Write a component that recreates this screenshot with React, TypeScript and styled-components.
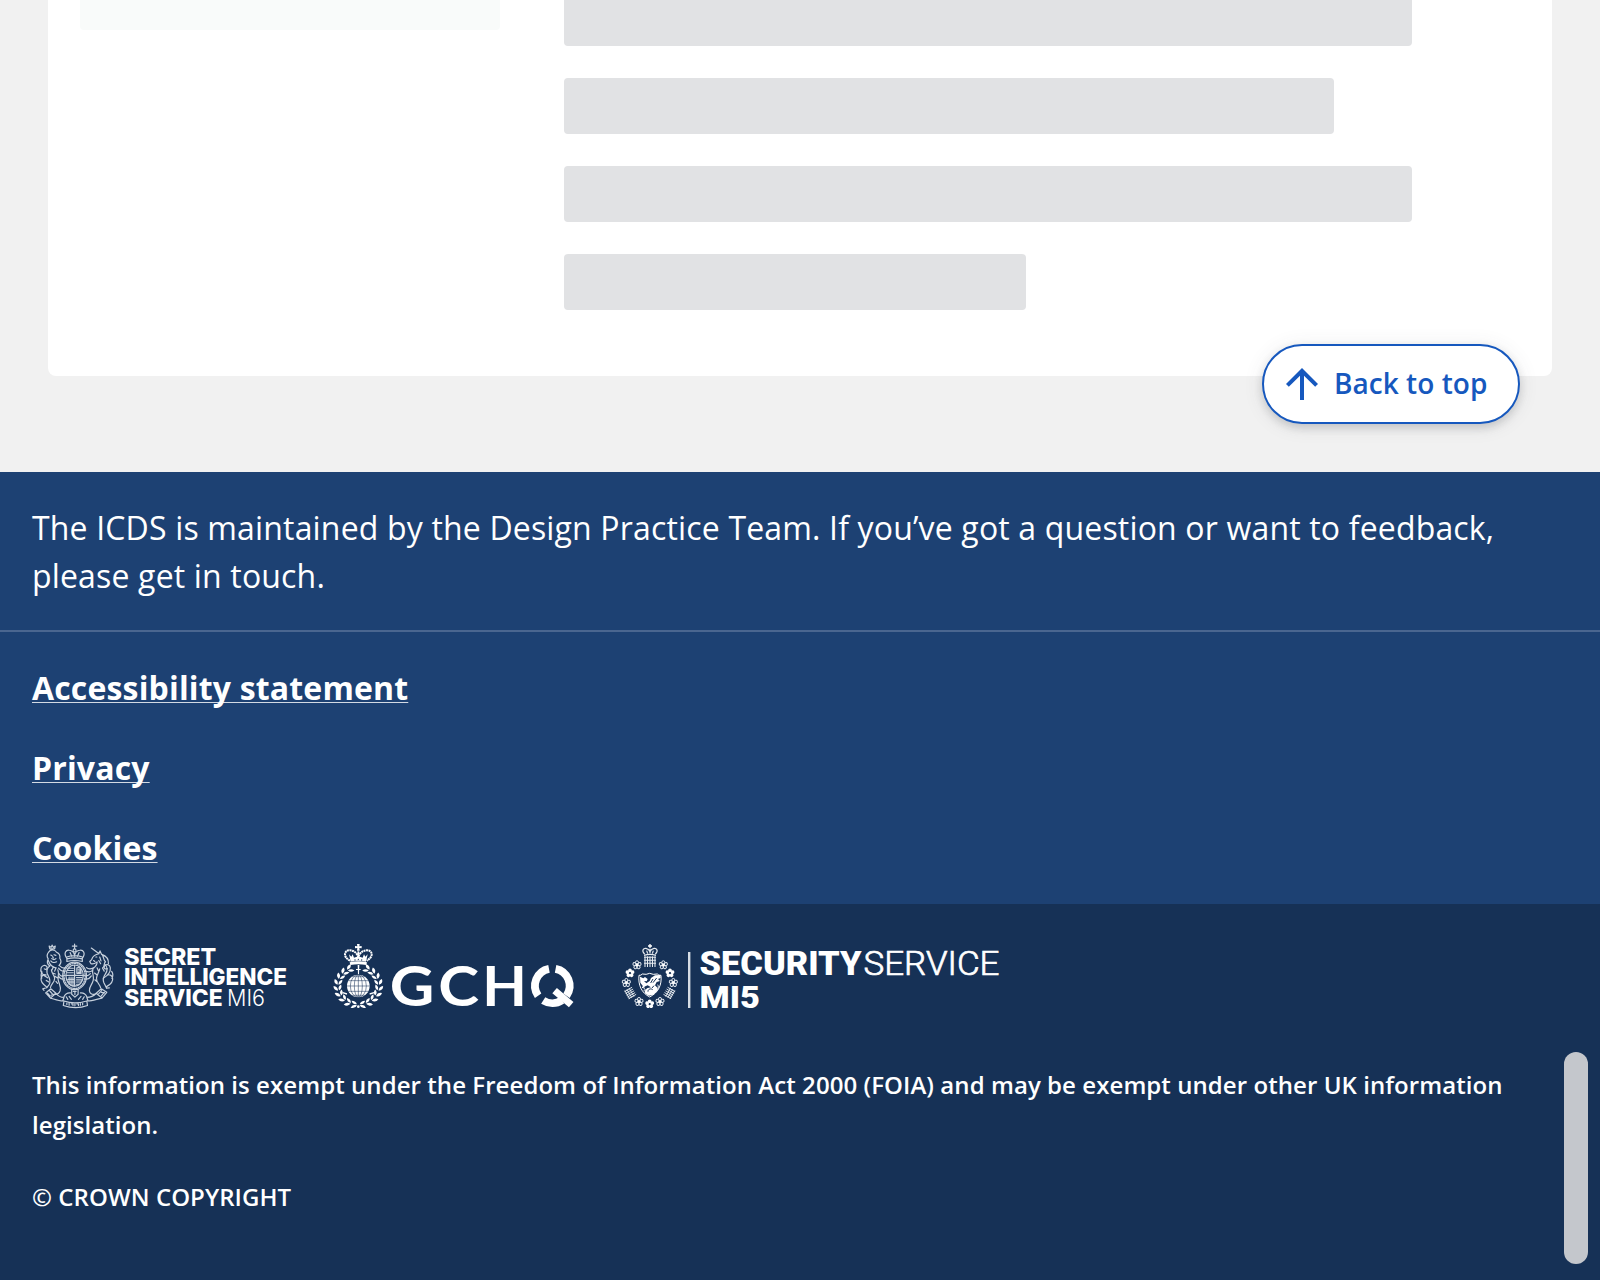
import React from "react";
import styled, { createGlobalStyle } from "styled-components";

const GlobalStyle = createGlobalStyle`
  *, *::before, *::after { box-sizing: border-box; }
  html, body { margin: 0; padding: 0; }
  body { background: #f1f1f1; overflow: hidden; font-family: "Open Sans", "Noto Sans", sans-serif; }
`;

const Page = styled.div`
  position: relative;
  display: flex;
  flex-direction: column;
  width: 1600px;
  height: 1280px;
  overflow: hidden;
  background: #f1f1f1;
`;

const Main = styled.main`
  height: 472px;
  padding: 0 48px 96px;
`;

const Card = styled.section`
  display: grid;
  grid-template-columns: 420px 1fr;
  align-items: start;
  column-gap: 64px;
  height: 376px;
  padding: 0 32px;
  background: #ffffff;
  border-radius: 0 0 8px 8px;
`;

const SidePanel = styled.div`
  height: 30px;
  background: #f9fbfa;
  border-radius: 0 0 4px 4px;
`;

const Skeletons = styled.div`
  display: flex;
  flex-direction: column;
  gap: 32px;
`;

const Skeleton = styled.div<{ $width: number; $cut?: boolean }>`
  width: ${(p) => p.$width}px;
  height: ${(p) => (p.$cut ? 46 : 56)}px;
  background: #e1e2e4;
  border-radius: ${(p) => (p.$cut ? "0 0 4px 4px" : "4px")};
`;

const BackToTop = styled.button`
  position: absolute;
  top: 344px;
  right: 80px;
  display: flex;
  align-items: center;
  gap: 8px;
  width: 258px;
  height: 80px;
  padding: 0 0 0 14px;
  border: 2px solid #1658be;
  border-radius: 40px;
  background: #ffffff;
  color: #1658be;
  font: 600 28px/48px "Open Sans", "Noto Sans", sans-serif;
  white-space: nowrap;
  box-shadow: 0 4px 8px rgba(65, 70, 77, 0.2), 0 2px 20px rgba(65, 70, 77, 0.1);
`;

const ButtonLabel = styled.span`
  padding-bottom: 2px;
  letter-spacing: 0.04px;
`;

const Footer = styled.footer`
  color: #ffffff;
  background: #1d4173;
`;

const Description = styled.p`
  margin: 0;
  padding: 32px 32px 30px;
  border-bottom: 2px solid #4a6690;
  font-size: 32px;
  line-height: 48px;
  letter-spacing: 0.165px;
`;

const Links = styled.nav`
  display: flex;
  flex-direction: column;
  align-items: flex-start;
  gap: 32px;
  padding: 32px;
`;

const FooterLink = styled.a`
  color: #ffffff;
  font-size: 32px;
  font-weight: 700;
  line-height: 48px;
  letter-spacing: 0.16px;
  text-decoration: underline;
  text-decoration-color: #d3dae4;
  text-decoration-thickness: 1px;
  text-decoration-skip-ink: none;
  text-underline-offset: 2px;
`;

const Legal = styled.div`
  display: flex;
  flex-direction: column;
  height: 376px;
  padding: 32px 32px 0;
  background: #163156;
`;

const Logos = styled.div`
  display: flex;
  align-items: flex-start;
  height: 129px;
`;

const Logo = styled.svg`
  display: block;
  flex: none;
  height: 80px;
  fill: #ffffff;
`;

const LegalText = styled.p`
  margin: 0 0 32px;
  font-size: 24px;
  font-weight: 600;
  line-height: 40px;
  letter-spacing: 0.066px;
`;

const ScrollThumb = styled.div`
  position: absolute;
  top: 1052px;
  right: 12px;
  width: 24px;
  height: 212px;
  border-radius: 12px;
  background: #c4c7cc;
`;

const NAVY = "#163156";

type WordProps = {
  x: number;
  y: number;
  width: number;
  size: number;
  weight: number;
  family?: string;
  outline?: number;
  children: string;
};

function Word({ x, y, width, size, weight, family = "Roboto", outline = 0, children }: WordProps) {
  return (
    <text
      x={x}
      y={y}
      fontFamily={`${family}, "Liberation Sans", sans-serif`}
      fontSize={size}
      fontWeight={weight}
      textLength={width}
      lengthAdjust="spacingAndGlyphs"
      stroke={outline ? "#fff" : "none"}
      strokeWidth={outline}
    >
      {children}
    </text>
  );
}

function SisLogo() {
  return (
    <Logo width="288" viewBox="32 936 288 80" role="img" aria-label="Secret Intelligence Service MI6">
      <g transform="translate(36.6 940.3) scale(.322 .321)" fill="none" stroke="#c6d0dc" strokeWidth="3.7" strokeLinecap="round" strokeLinejoin="round">
        {/* crown */}
        <path d="M118 12v14M111 18h14M118 27c-6 0-6 9 0 9s6-9 0-9" />
        <path d="M94 56C82 40 92 29 102 31c8 1 14 7 16 15 2-8 8-14 16-15 10-2 20 9 8 25M94 52q24-8 48 0M94 58q24-7 48 0v8q-24-6-48 0zM104 38l5 12M132 38l-5 12M118 40v10" />
        {/* garter and quartered shield */}
        <ellipse cx="118" cy="111" rx="37" ry="43" />
        <ellipse cx="118" cy="111" rx="33" ry="39" strokeDasharray="4 4" />
        <ellipse cx="118" cy="110" rx="27" ry="33" />
        <path d="M118 78v65M91 109h54M97 87h17M95 94h19M95 101h19M125 86c10-3 14 2 13 17h-13zM129 92h6v7h-6M101 115v22M107 115v26M113 115v28M97 122h18M97 130h18M124 116h17M124 123h16M124 130h13M124 137h8" />
        {/* lion */}
        <path d="M41 27l-2-9 6 4 3-7 4 7 6-4-2 9zM38 36c5-8 19-8 24 1 5 2 12 8 10 19 5 7 4 16-2 22M38 36c-7 8-6 16-2 22-4 8-3 16 4 21M44 46l4 2M54 45l6 2M47 57c5 4 9 4 13 0M50 51l2 4M44 64c4 5 12 7 18 3M36 62c5 14 14 22 24 24" />
        <path d="M42 79c-12 8-12 20-6 31 5 9 8 18 3 28l-8 10M70 78c8 8 14 11 21 7M68 87c6 8 13 11 21 9M70 104c4 10 12 8 18 5M67 111c6 9 13 12 20 9M66 92c5 13-1 22 1 31 3 15 10 21 6 34-3 8-10 12-18 11M46 92c1 12 10 17 10 27 0 14-12 17-13 28M52 83l-4 9M60 86l-4 10M50 102l8 3M57 112l7 5M60 128l5 6" />
        <path d="M34 117c-14-8-24-20-20-31 3-8 13-11 18-4 3 6-3 11-8 7M32 146c-13-9-20-19-18-28 2-9 9-13 16-10M17 99c-4 6-4 12-1 19M27 149l-8 2 4 5M54 168l-9 3M38 130l-8-5" />
        {/* unicorn */}
        <path d="M170 24l23 17M194 42c-12 2-20 9-23 18l-6 6 4 7c8 2 13-1 18-5M193 42l4-9 5 11c15 5 22 15 21 29M184 52h3M177 63l4 3M188 67c0 10-5 15-11 19M202 43c8 8 4 17 12 24-7 6-1 13-9 19M196 52l4 12M193 63l6 10" />
        <path d="M177 86c-9 4-16 5-22-1M174 94c-7 5-15 5-22 2M167 104c-6 7-14 8-20 5M170 111c-6 9-13 12-21 9M212 75c9 9 9 20 1 31-6 9-9 15-4 26l8 16M175 88c-4 15 4 24 1 36-4 17-13 19-12 33M196 89c-3 14-9 18-10 29-1 13 10 18 13 30M164 157c1 9 8 13 17 11M188 86l4 9M180 102l7 5M181 123l7 6M205 87l5 9" />
        <path d="M207 118c16-9 23-21 22-32-1-10-12-14-18-6-4 6 2 12 8 8M216 145c14-7 22-18 20-28-2-8-10-12-17-8M233 97c5 7 5 14 1 22M217 149l9-1M201 162l10 2" />
        {/* compartment and motto ribbon */}
        <path d="M44 151l-16 13 15 16 17-15zM60 165c6 8 14 13 25 13l-4 11c-11 0-24-5-38-9M34 165l8 9M41 158l8 9M201 151l17 11-15 18-18-15zM185 165c-8 9-16 13-29 13l4 11c12 0 25-5 43-9M210 162l-9 11M202 157l-9 9M85 189c22 8 44 8 71 0l2 14c-24 9-49 9-75 0zM84 178c5-12 11-15 21-14M157 178c-5-12-11-15-21-14M109 153h20v15l-10 9-10-9zM114 159h9M119 159v10M101 175l7 9M138 175l-8 9M92 176l5 8M148 176l-5 8" />
        <path d="M94 196v4M101 196v6M108 198h5v5M119 198v6M125 198h5v5M136 197v5M143 196v5" />
      </g>
      <Word x={124.2} y={964.8} width={92} size={22.4} weight={800} family="Inter">SECRET</Word>
      <Word x={124} y={985.1} width={163} size={22.4} weight={800} family="Inter">INTELLIGENCE</Word>
      <Word x={124.2} y={1005.6} width={98.5} size={22.4} weight={800} family="Inter">SERVICE</Word>
      <Word x={227} y={1005.6} width={38} size={22.4} weight={300} family="Inter">MI6</Word>
    </Logo>
  );
}

const LEAF_ANGLES = [24, 42, 60, 78, 96, 114, 132, 150, 168];

function Wreath() {
  return (
    <>
      {[1, -1].map((side) =>
        LEAF_ANGLES.map((angle) => (
          <g key={`${side}${angle}`} transform={`translate(85 138) scale(${side} .92) rotate(${angle})`}>
            <path d="M8 -59Q3 -48 -10 -51Q-4 -63 8 -59z" />
            <path d="M9 -62Q6 -76 -8 -74Q-5 -61 9 -62z" />
          </g>
        )),
      )}
    </>
  );
}

function GchqLogo() {
  return (
    <Logo width="288" viewBox="320 936 288 80" role="img" aria-label="GCHQ">
      <g transform="translate(330 940) scale(.3333)">
        <path d="M81 12h8l-1 7 7-1v7l-7-1 1 8h-8l1-8-7 1v-7l7 1z" />
        <g fill="none" stroke="#fff" strokeWidth="6">
          <path d="M60 62C38 51 42 30 60 31c14 1 22 10 25 20 3-10 11-19 25-20 18-1 22 20 0 31" strokeDasharray="6 1.5" />
          <path d="M85 34v17" strokeWidth="5" />
        </g>
        <path d="M57 43l7 7 4-7 4 10 13-4 13 4 4-10 4 7 7-7-5 22q-23-6-46 0z" />
        <path d="M59 67q26-6 52 0l-2 8q-24-5-48 0z" />
        <circle cx="75" cy="60" r="2" fill={NAVY} />
        <circle cx="85" cy="58" r="2" fill={NAVY} />
        <circle cx="95" cy="60" r="2" fill={NAVY} />
        <Wreath />
        <path d="M83 75h5l-1 29h-3zM78 87h14v3H78z" />
        <circle cx="85" cy="138" r="34" />
        <g transform="translate(1 0)" fill="none" stroke={NAVY} strokeWidth="1.6">
          <path d="M84 104v68M50 138h68M54 122h60M54 154h60M64 110h40M64 166h40" />
          <ellipse cx="84" cy="138" rx="12" ry="34" />
          <ellipse cx="84" cy="138" rx="24" ry="34" />
        </g>
        <path d="M38 158l13 4M132 158l-13 4" fill="none" stroke="#fff" strokeWidth="4" />
        <circle cx="85" cy="200" r="4" />
      </g>
      <Word x={389.8} y={1005.6} width={44.6} size={55.5} weight={700} family="Lato">G</Word>
      <Word x={438.3} y={1005.6} width={40.8} size={55.5} weight={700} family="Lato">C</Word>
      <Word x={482.2} y={1005.6} width={44.6} size={55.5} weight={700} family="Lato">H</Word>
      {/* broken ring of the Q */}
      <g fill="none" stroke="#fff" strokeWidth="7.8">
        <path d="M549 968.8A17.3 17.3 0 0 0 538.1 995.7" />
        <path d="M555.6 968.8A17.3 17.3 0 0 1 566.5 995.7" />
        <path d="M543.2 1000.5A17.3 17.3 0 0 0 562 1000.2" />
        <path d="M554.6 990.6l16.6 14" strokeWidth="7" />
      </g>
    </Logo>
  );
}

const ROSES: Array<[number, number, boolean]> = [
  [57, 75, false],
  [136, 75, false],
  [36, 99, true],
  [156, 99, true],
  [25, 128, false],
  [166, 128, false],
  [63, 185, false],
  [126, 185, false],
  [95, 192, true],
];

function Rose({ x, y, solid }: { x: number; y: number; solid: boolean }) {
  return (
    <g transform={`translate(${x} ${y})`}>
      {[0, 72, 144, 216, 288].map((angle) => (
        <circle
          key={angle}
          cy="-8"
          r={solid ? 5.6 : 4.6}
          transform={`rotate(${angle})`}
          fill={solid ? "#fff" : "none"}
          stroke="#dfe5ec"
          strokeWidth={solid ? 0 : 3}
        />
      ))}
      <circle r={solid ? 2 : 4} fill={solid ? NAVY : "#fff"} />
    </g>
  );
}

function Grate({ transform }: { transform: string }) {
  return (
    <path
      transform={transform}
      d="M-18 -13H18M-18 -4H18M-18 5H18M-15 -16V16M-7.5 -16V16M0 -16V16M7.5 -16V16M15 -16V16"
      fill="none"
      stroke="#e6ebf0"
      strokeWidth="3.2"
    />
  );
}

function Mi5Logo() {
  return (
    <Logo width="400" viewBox="608 936 400 80" role="img" aria-label="Security Service MI5">
      <g transform="translate(618 940) scale(.3333)">
        <path d="M96 12v12M90 18h12" stroke="#fff" strokeWidth="4" />
        <path d="M80 42c-11-11-3-18 4-17 6 1 10 5 12 10 2-5 6-9 12-10 7-1 15 6 4 17M78 46q18-6 36 0M86 32l3 9M106 32l-3 9M96 26v14" fill="none" stroke="#e6ebf0" strokeWidth="3.6" />
        <Grate transform="translate(96 65)" />
        {ROSES.map(([x, y, solid]) => (
          <Rose key={`${x}-${y}`} x={x} y={y} solid={solid} />
        ))}
        <Grate transform="translate(37 159) rotate(-120) scale(.82)" />
        <Grate transform="translate(154 159) rotate(120) scale(.82)" />
        {/* winged lion on its shield */}
        <path d="M63 106q6 1 10-4q12 3 22-2q10 5 23 2q4 5 11 4c3 29-8 52-34 65c-25-13-35-36-32-65z" fill="none" stroke="#fff" strokeWidth="3" />
        <path d="M66 110l10 5 5-4 8 6-3 7-8-1 7 7 10-7 4-9 12-8 16-1 1 9-8 3 6 6-10 3-5 10 8 8-3 10-10 10-13 3-11-6-2-8 7-8 12-3-10-6-7 3-9 6 1-8-7-9z" />
        <path d="M90 155c-1-7 9-11 14-6M105 117l-7 12M116 114l-11 14M108 137l-6 7" fill="none" stroke={NAVY} strokeWidth="3" />
        <path d="M119 134c5 8 0 17-8 24M72 142l9 3M77 151l6-2" fill="none" stroke="#fff" strokeWidth="3" />
      </g>
      <rect x="688" y="952" width="2.4" height="56" fill="#d5dce4" />
      <Word x={699.6} y={975.3} width={162} size={32.4} weight={900}>SECURITY</Word>
      <Word x={863.5} y={975.3} width={136} size={32.4} weight={300} outline={0.7}>SERVICE</Word>
      <Word x={699.5} y={1007.6} width={60.5} size={32} weight={900}>MI5</Word>
    </Logo>
  );
}

export default function App() {
  return (
    <>
      <GlobalStyle />
      <Page>
        <Main>
          <Card>
            <SidePanel />
            <Skeletons>
              <Skeleton $width={848} $cut />
              <Skeleton $width={770} />
              <Skeleton $width={848} />
              <Skeleton $width={462} />
            </Skeletons>
          </Card>
        </Main>
        <Footer>
          <Description>
            The ICDS is maintained by the Design Practice Team. If you’ve got a question or want to feedback, please get in touch.
          </Description>
          <Links>
            <FooterLink>Accessibility statement</FooterLink>
            <FooterLink>Privacy</FooterLink>
            <FooterLink>Cookies</FooterLink>
          </Links>
          <Legal>
            <Logos>
              <SisLogo />
              <GchqLogo />
              <Mi5Logo />
            </Logos>
            <LegalText>
              This information is exempt under the Freedom of Information Act 2000 (FOIA) and may be exempt under other UK information legislation.
            </LegalText>
            <LegalText>© CROWN COPYRIGHT</LegalText>
          </Legal>
        </Footer>
        <BackToTop>
          <svg width="48" height="48" viewBox="0 0 24 24" fill="currentColor">
            <path d="M4 12l1.41 1.41L11 7.83V20h2V7.83l5.58 5.59L20 12l-8-8-8 8z" />
          </svg>
          <ButtonLabel>Back to top</ButtonLabel>
        </BackToTop>
        <ScrollThumb />
      </Page>
    </>
  );
}
